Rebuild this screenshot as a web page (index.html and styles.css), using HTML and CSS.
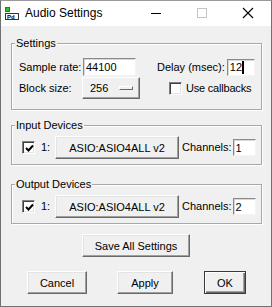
FILE: index.html
```html
<!DOCTYPE html>
<html lang="en">
    <head>
        <meta charset="UTF-8">
        <title>Audio Settings</title>
        <link rel="stylesheet" href="styles.css">
    </head>
    <body>
        <div class="window">
            <div class="titlebar">
                <svg class="app-icon" width="14" height="13" viewBox="0 0 14 13">
                    <rect x="0.5" y="0.5" width="4" height="4" fill="#2fbf2f" stroke="#138a13"/>
                    <rect x="0.5" y="6.5" width="13" height="6" fill="#fff" stroke="#333"/>
                    <text x="2" y="11.5" font-size="6" font-family="Liberation Sans, sans-serif" font-weight="bold" fill="#000">Pd</text>
                </svg>
                <span class="title">Audio Settings</span>
                <div class="caption">
                    <span class="cap-btn">
                        <svg width="46" height="25"><line x1="18" y1="12.5" x2="28" y2="12.5" stroke="#000"/></svg>
                    </span>
                    <span class="cap-btn">
                        <svg width="46" height="25"><rect x="18.5" y="7.5" width="9" height="9" fill="none" stroke="#c4c4c4"/></svg>
                    </span>
                    <span class="cap-btn">
                        <svg width="46" height="25"><path d="M18 7 L28 17 M28 7 L18 17" stroke="#000" stroke-width="1.1"/></svg>
                    </span>
                </div>
            </div>

            <div class="content">
                <fieldset class="group settings">
                    <legend>Settings</legend>
                    <div class="row first">
                        <span class="lbl rate-lbl">Sample rate:</span>
                        <span class="entry rate">44100</span>
                        <span class="lbl delay-lbl">Delay (msec):</span>
                        <span class="entry delay">12<span class="caret"></span></span>
                    </div>
                    <div class="row second">
                        <span class="lbl block-lbl">Block size:</span>
                        <span class="menubtn">256<span class="indicator"></span></span>
                        <span class="check cb-callbacks"></span>
                        <span class="lbl cb-text">Use callbacks</span>
                    </div>
                </fieldset>

                <fieldset class="group devices input">
                    <legend>Input Devices</legend>
                    <div class="row dev-row">
                        <span class="check checked">
                            <svg width="11" height="11"><polyline points="2,5 4.5,7.5 9,2.5" fill="none" stroke="#000" stroke-width="2"/></svg>
                        </span>
                        <span class="lbl num">1:</span>
                        <span class="btn dev-btn">ASIO:ASIO4ALL v2</span>
                        <span class="lbl ch-lbl">Channels:</span>
                        <span class="entry ch">1</span>
                    </div>
                </fieldset>

                <fieldset class="group devices output">
                    <legend>Output Devices</legend>
                    <div class="row dev-row">
                        <span class="check checked">
                            <svg width="11" height="11"><polyline points="2,5 4.5,7.5 9,2.5" fill="none" stroke="#000" stroke-width="2"/></svg>
                        </span>
                        <span class="lbl num">1:</span>
                        <span class="btn dev-btn">ASIO:ASIO4ALL v2</span>
                        <span class="lbl ch-lbl">Channels:</span>
                        <span class="entry ch">2</span>
                    </div>
                </fieldset>

                <div class="save-row">
                    <span class="btn save">Save All Settings</span>
                </div>

                <div class="bottom-row">
                    <span class="btn cancel">Cancel</span>
                    <span class="btn apply">Apply</span>
                    <span class="btn ok">OK</span>
                </div>
            </div>
        </div>
    </body>
</html>
```

FILE: styles.css
```css
body {
    margin: 0;
    padding: 0;
    font-family: "Liberation Sans", Arial, sans-serif;
    font-size: 11px;
    color: #000;
    background: #fff;
}

.window {
    width: 272px;
    height: 307px;
    box-sizing: border-box;
    border: 1px solid #707070;
    border-top-color: #9a9a9a;
    background: #f0f0f0;
    overflow: hidden;
}

.titlebar {
    height: 25px;
    background: #fff;
    display: flex;
    align-items: center;
}

.app-icon {
    margin-left: 4px;
    margin-top: -1px;
}

.title {
    font-size: 12px;
    margin-left: 6px;
    padding-bottom: 1px;
}

.caption {
    margin-left: auto;
    display: flex;
}

.cap-btn {
    width: 46px;
    height: 25px;
    display: block;
}

.cap-btn svg {
    display: block;
}

.content {
    display: flex;
    flex-direction: column;
}

/* group boxes */
.group {
    margin: 0 0 0 10px;
    padding: 0;
    width: 251px;
    box-sizing: border-box;
    min-inline-size: 0;
    border: 1px solid #a8a8a8;
    box-shadow: inset 1px 1px 0 #fff, 1px 1px 0 #fff;
}

.group legend {
    margin-left: 3px;
    padding: 0 1px;
    line-height: 13px;
    background: #f0f0f0;
}

.settings {
    margin-top: 11px;
    padding-bottom: 10px;
}

.input {
    margin-top: 9px;
    padding-bottom: 5px;
}

.output {
    margin-top: 13px;
    padding-bottom: 5px;
}

.row {
    display: flex;
    align-items: center;
}

.first {
    padding: 7px 0 0 7px;
    height: 20px;
}

.second {
    padding-left: 7px;
    height: 22px;
}

.lbl {
    white-space: nowrap;
    line-height: 13px;
}

.rate-lbl {
    width: 64px;
}

.block-lbl {
    width: 63px;
}

.entry {
    box-sizing: border-box;
    background: #fff;
    border: 1px solid;
    border-color: #8a8a8a #f4f4f4 #f4f4f4 #8a8a8a;
    box-shadow: inset 1px 1px 0 #d8d8d8;
    line-height: 14px;
    padding-left: 2px;
    display: flex;
    align-items: center;
}

.rate {
    width: 53px;
    height: 18px;
}

.delay-lbl {
    margin-left: 21px;
}

.delay {
    margin-left: 2px;
    width: 28px;
    height: 17px;
}

.caret {
    display: inline-block;
    width: 2px;
    height: 13px;
    background: #000;
}

.menubtn {
    box-sizing: border-box;
    width: 58px;
    height: 22px;
    border: 1px solid;
    border-color: #fff #696969 #696969 #fff;
    box-shadow: inset -1px -1px 0 #a0a0a0;
    display: flex;
    align-items: center;
    padding-left: 7px;
}

.indicator {
    box-sizing: border-box;
    width: 14px;
    height: 4px;
    margin-left: auto;
    margin-right: 6px;
    border: 1px solid;
    border-color: #fff #696969 #696969 #fff;
}

.check {
    box-sizing: border-box;
    width: 13px;
    height: 13px;
    background: #fff;
    border: 1px solid;
    border-color: #808080 #fff #fff #808080;
    box-shadow: inset 1px 1px 0 #404040, inset -1px -1px 0 #e3e3e3;
    display: flex;
    align-items: center;
    justify-content: center;
}

.check svg {
    display: block;
    margin: 1px 0 0 1px;
}

.cb-callbacks {
    margin-left: 29px;
}

.cb-text {
    margin-left: 4px;
    letter-spacing: -0.2px;
}

/* device rows */
.dev-row {
    padding: 4px 0 0 10px;
    height: 23px;
}

.num {
    margin-left: 6px;
    width: 14px;
}

.btn {
    box-sizing: border-box;
    height: 23px;
    border: 1px solid;
    border-color: #fff #696969 #696969 #fff;
    box-shadow: inset -1px -1px 0 #a0a0a0, inset 1px 1px 0 #e3e3e3;
    background: #f0f0f0;
    display: flex;
    align-items: center;
    justify-content: center;
    white-space: nowrap;
}

.dev-btn {
    width: 124px;
}

.ch-lbl {
    margin-left: 3px;
}

.ch {
    margin-left: 1px;
    width: 23px;
    height: 17px;
}

.save-row {
    display: flex;
    justify-content: center;
    margin-top: 10px;
}

.save {
    width: 108px;
}

.bottom-row {
    display: flex;
    margin-top: 14px;
}

.cancel {
    margin-left: 26px;
    width: 60px;
}

.apply {
    margin-left: 30px;
    width: 56px;
}

.ok {
    margin-left: 31px;
    width: 42px;
    border-color: #3a3a3a;
    box-shadow: inset 1px 1px 0 #fff, inset -1px -1px 0 #696969, inset -2px -2px 0 #a0a0a0;
}
```
